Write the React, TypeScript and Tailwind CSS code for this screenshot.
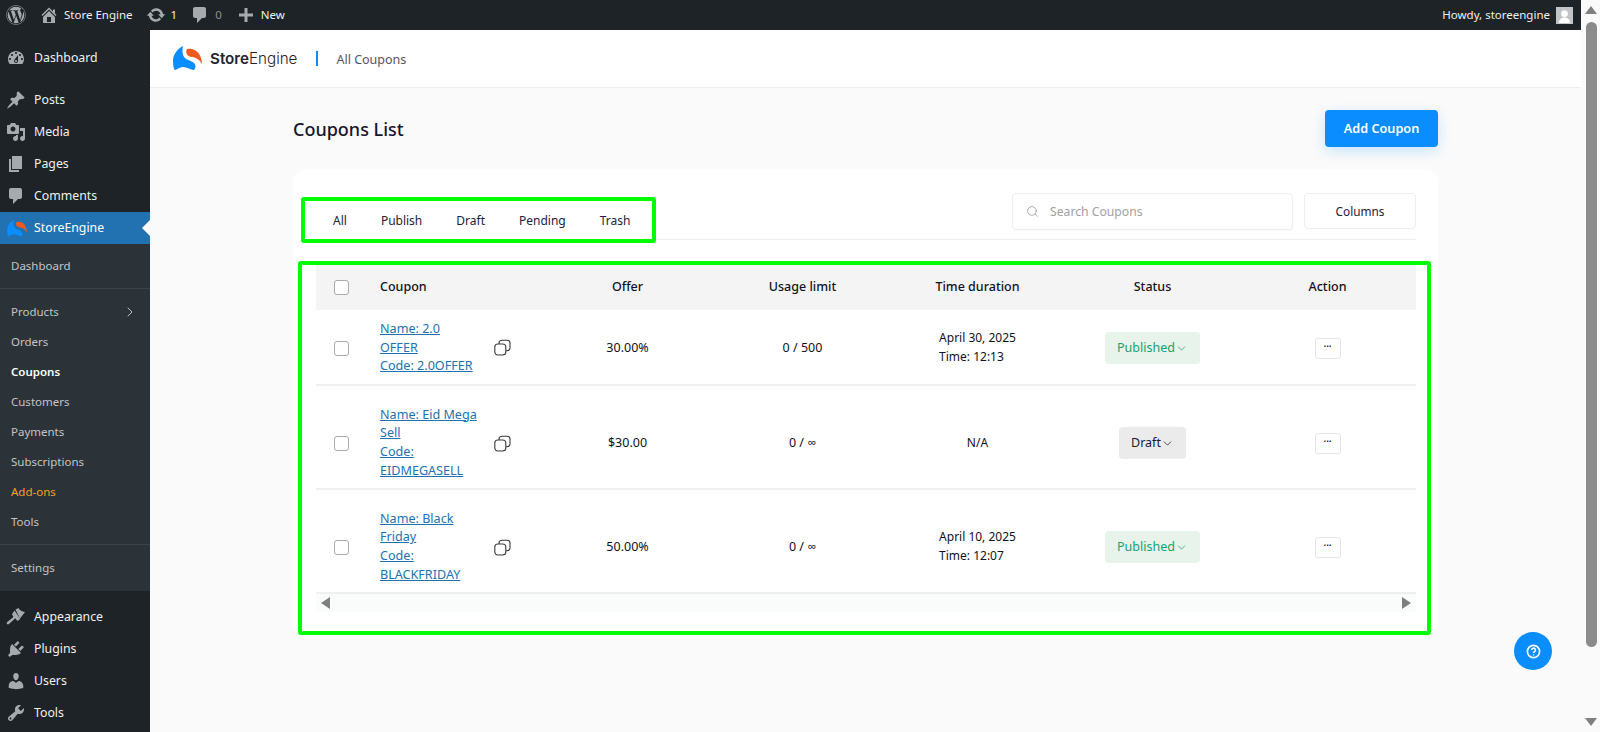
import { ChevronDown, ChevronRight, Search } from "lucide-react";
import { FaWordpress } from "react-icons/fa";

const icons: Record<string, string> = {
  dashboard:
    "M3.76 16h12.48c1.1-1.37 1.76-3.11 1.76-5 0-4.42-3.58-8-8-8s-8 3.58-8 8c0 1.89.66 3.63 1.76 5zM10 4c.55 0 1 .45 1 1s-.45 1-1 1-1-.45-1-1 .45-1 1-1zM6 6c.55 0 1 .45 1 1s-.45 1-1 1-1-.45-1-1 .45-1 1-1zm8 0c.55 0 1 .45 1 1s-.45 1-1 1-1-.45-1-1 .45-1 1-1zm-5.37 5.55L12 7v6c0 1.1-.9 2-2 2s-2-.9-2-2c0-.57.24-1.08.63-1.45zM4 10c.55 0 1 .45 1 1s-.45 1-1 1-1-.45-1-1 .45-1 1-1zm12 0c.55 0 1 .45 1 1s-.45 1-1 1-1-.45-1-1 .45-1 1-1zm-5 3c0-.55-.45-1-1-1s-1 .45-1 1 .45 1 1 1 1-.45 1-1z",
  posts:
    "M10.44 3.02l1.82-1.82 6.36 6.35-1.83 1.82c-1.05-.68-2.48-.57-3.41.36l-.75.75c-.92.93-1.04 2.35-.35 3.41l-1.83 1.82-2.41-2.41-2.8 2.79c-.42.42-3.38 2.71-3.8 2.29s1.86-3.39 2.28-3.81l2.79-2.79L4.1 9.36l1.83-1.82c1.05.69 2.48.57 3.4-.36l.75-.75c.93-.92 1.05-2.35.36-3.41z",
  media:
    "M13 11V4c0-.55-.45-1-1-1h-1.67L9 1H5L3.67 3H2c-.55 0-1 .45-1 1v7c0 .55.45 1 1 1h10c.55 0 1-.45 1-1zM7 4.5c1.38 0 2.5 1.12 2.5 2.5S8.38 9.5 7 9.5 4.5 8.38 4.5 7 5.62 4.5 7 4.5zM14 6h5v10.5c0 1.38-1.12 2.5-2.5 2.5S14 17.88 14 16.5s1.12-2.5 2.5-2.5c.17 0 .34.02.5.05V9h-3V6zm-4 8.05V13h2v3.5c0 1.38-1.12 2.5-2.5 2.5S7 17.88 7 16.5 8.12 14 9.5 14c.17 0 .34.02.5.05z",
  pages: "M6 15V2h10v13H6zm-1 1h8v2H3V5h2v11z",
  comments:
    "M5 2h9c1.1 0 2 .9 2 2v7c0 1.1-.9 2-2 2h-2l-5 5v-5H5c-1.1 0-2-.9-2-2V4c0-1.1.9-2 2-2z",
  appearance:
    "M9.5 2.5l3-1.5c1 2 3 3.5 6.5 4l-5 6.5zM8.6 3.4l5.6 8.6-1.8 1.4c-.5.4-1.2.3-1.6-.2l-.9-1.2c-.4-.5-1-.5-1.4-.1l-5.5 5.2c-.6.5-1.5.5-2-.1s-.4-1.4.2-1.9l5.7-4.7c.4-.4.5-1 .1-1.4l-.7-1c-.3-.5-.3-1.1.1-1.5z",
  plugins:
    "M13.11 4.36L9.87 7.6 8 5.73l3.24-3.24c.35-.34 1.05-.2 1.56.32.52.51.66 1.21.31 1.55zm-8 1.77l.91-1.12 9.01 9.01-1.19.84c-.71.71-2.63 1.16-3.82 1.16H6.14L4.9 17.26c-.59.59-1.54.59-2.12 0-.59-.58-.59-1.53 0-2.12l1.24-1.24v-3.88c0-1.13.4-3.19 1.09-3.89zm7.26 3.97l3.24-3.24c.34-.35 1.04-.21 1.55.31.52.51.66 1.21.31 1.55l-3.24 3.25z",
  users:
    "M10 9.25c-2.27 0-2.73-3.44-2.73-3.44C7 4.02 7.82 2 9.97 2c2.16 0 2.98 2.02 2.71 3.81 0 0-.41 3.44-2.68 3.44zm0 2.57L12.72 10c2.39 0 4.52 2.33 4.52 4.53v2.49s-3.65 1.13-7.24 1.13c-3.65 0-7.24-1.13-7.24-1.13v-2.49c0-2.25 1.94-4.48 4.47-4.48z",
  tools:
    "M16.68 9.77c-1.34 1.34-3.3 1.67-4.95.99l-5.41 6.52c-.99.99-2.59.99-3.58 0s-.99-2.59 0-3.57l6.52-5.42c-.68-1.65-.35-3.61.99-4.95 1.28-1.28 3.12-1.62 4.72-1.06l-2.89 2.89 2.82 2.82 2.86-2.87c.53 1.58.18 3.39-1.08 4.65zM3.81 16.21c.4.39 1.04.39 1.43 0 .4-.4.4-1.04 0-1.43-.39-.4-1.03-.4-1.43 0-.39.39-.39 1.03 0 1.43z",
  home: "M16 8.5l1.53 1.53-1.06 1.06L10 4.62l-6.47 6.47-1.06-1.06L10 2.5l4 4v-2h2v4zm-6-2.46l6 5.99V18H4v-5.97zM12 17v-5H8v5h4z",
  update:
    "M10.2 3.28c3.53 0 6.43 2.61 6.92 6h2.08l-3.5 4-3.5-4h2.32c-.45-1.97-2.21-3.45-4.32-3.45-1.45 0-2.73.71-3.54 1.78L4.95 5.66C6.23 4.2 8.11 3.28 10.2 3.28zm-.4 13.44c-3.52 0-6.43-2.61-6.92-6H.8l3.5-4c1.17 1.33 2.33 2.67 3.5 4H5.48c.45 1.97 2.21 3.45 4.32 3.45 1.45 0 2.73-.71 3.54-1.78l1.71 1.95c-1.28 1.46-3.15 2.38-5.25 2.38z",
  plus: "M17 8.5v3h-5.5V17h-3v-5.5H3v-3h5.5V3h3v5.5z",
};

function Dash({ name, className }: { name: string; className: string }) {
  return (
    <svg viewBox="0 0 20 20" fill="currentColor" className={className}>
      <path d={icons[name]} />
    </svg>
  );
}

function Logo({ className }: { className: string }) {
  return (
    <svg viewBox="0 0 29 25" className={className}>
      <path
        fill="#0a8dff"
        d="M10 0C4 3 0 9 0 15c0 5 1 9 2 9 2 0 4-3 8-3s8 3 11 3c2-2 2-5 0-7-4-4-14-2-11-17z"
      />
      <path fill="#f4591f" d="M14 3c8-2 15 5 15 15-3-5-7-7-10-7-5 0-7-5-5-8z" />
    </svg>
  );
}

function MainItem({ icon, label }: { icon: string; label: string }) {
  return (
    <div className="flex h-8 items-center text-[12.3px] text-[#f0f0f1]">
      <div className="flex w-[34px] justify-center pr-[2px]">
        <Dash name={icon} className="h-5 w-5 text-[#a7aaad]" />
      </div>
      <span className="pt-[1px]">{label}</span>
    </div>
  );
}

function SubItem({ label, className = "text-[#c3c4c7]" }: { label: string; className?: string }) {
  return (
    <div className={`flex h-[30px] items-center justify-between pl-[11px] pr-[12px] text-[11.5px] ${className}`}>
      <span>{label}</span>
      {label === "Products" && <ChevronRight className="h-4 w-4" strokeWidth={1.5} />}
    </div>
  );
}

function Sidebar() {
  return (
    <aside className="flex w-[150px] shrink-0 flex-col bg-[#1d2327] pt-3">
      <MainItem icon="dashboard" label="Dashboard" />
      <div className="mt-[10px]">
        <MainItem icon="posts" label="Posts" />
        <MainItem icon="media" label="Media" />
        <MainItem icon="pages" label="Pages" />
        <MainItem icon="comments" label="Comments" />
      </div>
      <div className="relative flex h-8 items-center bg-[#2271b1] text-[12.3px] text-white">
        <div className="flex w-[34px] justify-center pr-[1px]">
          <Logo className="h-[17px] w-[20px]" />
        </div>
        <span className="pt-[1px]">StoreEngine</span>
        <div className="absolute right-0 top-[8px] h-0 w-0 border-y-[8px] border-r-[8px] border-y-transparent border-r-[#fafafa]" />
      </div>
      <div className="bg-[#2c3338] pb-2 pt-[7px]">
        <div className="border-b border-[#3c434a] pb-[7px]">
          <SubItem label="Dashboard" />
        </div>
        <div className="border-b border-[#3c434a] py-2 pb-[7px]">
          <SubItem label="Products" />
          <SubItem label="Orders" />
          <SubItem label="Coupons" className="font-semibold text-white" />
          <SubItem label="Customers" />
          <SubItem label="Payments" />
          <SubItem label="Subscriptions" />
          <SubItem label="Add-ons" className="text-[#f0a02c]" />
          <SubItem label="Tools" />
        </div>
        <div className="pt-2">
          <SubItem label="Settings" />
        </div>
      </div>
      <div className="mt-[10px]">
        <MainItem icon="appearance" label="Appearance" />
        <MainItem icon="plugins" label="Plugins" />
        <MainItem icon="users" label="Users" />
        <MainItem icon="tools" label="Tools" />
      </div>
    </aside>
  );
}

function AdminBar() {
  return (
    <header className="flex h-[30px] shrink-0 items-center justify-between bg-[#1d2327] text-[11.5px] text-[#f0f0f1]">
      <div className="flex items-center">
        <FaWordpress className="ml-[6px] h-5 w-5 text-[#a7aaad]" />
        <Dash name="home" className="ml-[13px] h-5 w-5 text-[#a7aaad]" />
        <span className="ml-[5px]">Store Engine</span>
        <Dash name="update" className="ml-[13px] h-5 w-5 text-[#a7aaad]" />
        <span className="ml-[5px]">1</span>
        <Dash name="comments" className="ml-[13px] h-5 w-5 text-[#a7aaad]" />
        <span className="ml-[5px] text-[#8c8f94]">0</span>
        <Dash name="plus" className="ml-[14px] h-5 w-5 text-[#a7aaad]" />
        <span className="ml-[5px]">New</span>
      </div>
      <div className="flex items-center pr-[8px]">
        <span>Howdy, storeengine</span>
        <div className="ml-[6px] flex h-[17px] w-[17px] items-end justify-center overflow-hidden border border-[#c3c4c7] bg-[#c3c4c7]">
          <svg viewBox="0 0 16 16" fill="white" className="h-[15px] w-[15px]">
            <circle cx="8" cy="6" r="3.5" />
            <path d="M2 16c0-4 3-6 6-6s6 2 6 6z" />
          </svg>
        </div>
      </div>
    </header>
  );
}

function CopyIcon() {
  return (
    <svg viewBox="0 0 17 17" fill="none" stroke="#3b3b3b" strokeWidth="1.1" className="h-[17px] w-[17px] shrink-0">
      <rect x="0.8" y="5" width="11" height="11" rx="3" />
      <path d="M5 5V4.3a3 3 0 0 1 3-3h5a3 3 0 0 1 3 3v4.4a3 3 0 0 1-3 3h-1.2" />
    </svg>
  );
}

function StatusPill({ status }: { status: string }) {
  const published = status === "Published";
  return (
    <div
      className={`flex h-[32px] items-center rounded-[4px] px-3 text-[12.5px] ${
        published ? "bg-[#e8f3ec] text-[#22a06b]" : "bg-[#ebebeb] text-[#1c1c2b]"
      }`}
    >
      {status}
      <ChevronDown className="h-[13px] w-[13px]" strokeWidth={1.4} />
    </div>
  );
}

const gridCols = "grid grid-cols-[50px_174px_repeat(5,175px)] items-center";

const rows = [
  {
    lines: ["Name: 2.0", "OFFER", "Code: 2.0OFFER"],
    offer: "30.00%",
    usage: "0 / 500",
    time: ["April 30, 2025", "Time: 12:13"],
    status: "Published",
    height: "h-[76px] pt-[2px]",
  },
  {
    lines: ["Name: Eid Mega", "Sell", "Code:", "EIDMEGASELL"],
    offer: "$30.00",
    usage: "0 / ∞",
    time: ["N/A"],
    status: "Draft",
    height: "h-[104px] pt-[12px]",
  },
  {
    lines: ["Name: Black", "Friday", "Code:", "BLACKFRIDAY"],
    offer: "50.00%",
    usage: "0 / ∞",
    time: ["April 10, 2025", "Time: 12:07"],
    status: "Published",
    height: "h-[104px] pt-[12px]",
  },
];

function CouponTable() {
  return (
    <div className="-ml-[18px] -mr-[15px] mt-[21px] h-[374px] rounded-[3px] border-4 border-[#00ff00] pl-[14px] pr-[11px]">
      <div className={`${gridCols} h-[45px] bg-[#f4f4f4] pb-[1px] text-center text-[12.5px] font-medium text-[#111122]`}>
        <div className="flex justify-center">
          <input type="checkbox" className="h-[15px] w-[15px] appearance-none rounded-[3px] border border-[#aaaaaa] bg-white" />
        </div>
        <div className="pl-[14px] text-left">Coupon</div>
        <div>Offer</div>
        <div>Usage limit</div>
        <div>Time duration</div>
        <div>Status</div>
        <div>Action</div>
      </div>
      {rows.map((row) => (
        <div
          key={row.lines[0]}
          className={`${gridCols} ${row.height} border-b-2 border-[#f0f0f0] text-center text-[12.5px] text-[#111122]`}
        >
          <div className="flex justify-center">
            <input type="checkbox" className="h-[15px] w-[15px] appearance-none rounded-[3px] border border-[#aaaaaa] bg-white" />
          </div>
          <div className="flex items-center pl-[14px]">
            <a className="block w-[114px] text-left text-[12.6px] leading-[18.7px] text-[#2271b1] underline">
              {row.lines.map((line) => (
                <span key={line} className="block">
                  {line}
                </span>
              ))}
            </a>
            <CopyIcon />
          </div>
          <div>{row.offer}</div>
          <div>{row.usage}</div>
          <div className="flex justify-center">
            <div className="text-left text-[12px] leading-[18.7px]">
              {row.time.map((t) => (
                <div key={t}>{t}</div>
              ))}
            </div>
          </div>
          <div className="flex justify-center">
            <StatusPill status={row.status} />
          </div>
          <div className="flex justify-center">
            <button className="flex h-[21px] w-[26px] items-center justify-center rounded-[3px] border border-[#e5e5e5] bg-white pb-[4px] text-[10px] font-medium leading-none text-black">
              ···
            </button>
          </div>
        </div>
      ))}
      <div className="flex h-[18px] items-center justify-between bg-[#fafbfb] px-[5px]">
        <div className="h-0 w-0 border-y-[6px] border-r-[9px] border-y-transparent border-r-[#7f7f7f]" />
        <div className="h-0 w-0 border-y-[6px] border-l-[9px] border-y-transparent border-l-[#7f7f7f]" />
      </div>
    </div>
  );
}

function CouponsCard() {
  return (
    <section className="mt-[23px] h-[464px] rounded-xl bg-white px-[23px] pt-[23px] pr-[22px]">
      <div className="flex h-[47px] items-start justify-between border-b border-[#ececec]">
        <div className="relative z-10 -ml-[15px] mt-1 flex h-[46px] w-[355px] items-center rounded-[3px] border-4 border-[#00ff00] bg-white pl-[11px] pt-[1px] text-[12px] text-[#22223a]">
          {["All", "Publish", "Draft", "Pending", "Trash"].map((tab) => (
            <span key={tab} className="px-[17px]">
              {tab}
            </span>
          ))}
        </div>
        <div className="flex items-start gap-[11px]">
          <div className="flex h-[37px] w-[281px] items-center rounded-[4px] border border-[#eeeeee] bg-white pl-[13px] shadow-[0_1px_1px_rgba(0,0,0,0.03)]">
            <Search className="h-[13px] w-[13px] text-[#9a9a9a]" strokeWidth={1.5} />
            <input
              placeholder="Search Coupons"
              className="ml-[11px] w-[200px] bg-transparent pt-[1px] text-[12.2px] outline-none placeholder:text-[#a0a0a0]"
            />
          </div>
          <button className="flex h-[36px] w-[112px] items-center justify-center rounded-[4px] border border-[#eeeeee] bg-white pt-[1px] text-[11.8px] text-[#22223a]">
            Columns
          </button>
        </div>
      </div>
      <CouponTable />
    </section>
  );
}

function Scrollbar() {
  return (
    <div className="flex w-[19px] shrink-0 flex-col items-center bg-[#fafafa]">
      <div className="mt-[6px] h-0 w-0 border-x-[6.5px] border-b-[8px] border-x-transparent border-b-[#7f7f7f]" />
      <div className="ml-[2px] mt-[8px] h-[625px] w-[11px] rounded-full bg-[#8b8b8b]" />
      <div className="mt-[71px] h-0 w-0 border-x-[6.5px] border-t-[8px] border-x-transparent border-t-[#7f7f7f]" />
    </div>
  );
}

export default function App() {
  return (
    <div
      className="relative flex h-[732px] w-[1600px] overflow-hidden bg-[#fafafa]"
      style={{ fontFamily: '"Noto Sans", "Open Sans", sans-serif' }}
    >
      <div className="flex min-w-0 flex-1 flex-col">
        <AdminBar />
        <div className="flex min-h-0 flex-1">
          <Sidebar />
          <main className="min-w-0 flex-1">
            <div className="flex h-[58px] items-center border-b border-[#eeeeee] bg-white pl-[23px]">
              <Logo className="h-[25px] w-[29px]" />
              <span className="ml-[8px] pt-[2px] text-[15.2px] text-[#23232f]" style={{ fontFamily: "Inter, sans-serif" }}>
                <span className="font-semibold">Store</span>
                <span className="font-light">Engine</span>
              </span>
              <div className="ml-[19px] h-[15px] w-[2px] bg-[#0a8dff]" />
              <span className="ml-[18px] pt-[3px] text-[12.5px] text-[#555560]">All Coupons</span>
            </div>
            <div className="pl-[143px] pr-[143px]">
              <div className="flex items-center justify-between pt-[22px]">
                <h1 className="mt-[2px] text-[18px] font-medium text-[#16162a]">Coupons List</h1>
                <button className="h-[37px] w-[113px] rounded-[4px] bg-[#0a8dff] text-[12.7px] font-semibold text-white shadow-[0_4px_14px_rgba(10,141,255,0.2)]">
                  Add Coupon
                </button>
              </div>
              <CouponsCard />
            </div>
          </main>
        </div>
      </div>
      <Scrollbar />
      <button className="absolute left-[1514px] top-[632px] flex h-[38px] w-[38px] items-center justify-center rounded-full bg-[#0a8dff]">
        <svg viewBox="0 0 16 16" fill="none" stroke="white" className="h-[15px] w-[15px]">
          <circle cx="8" cy="8" r="6.5" strokeWidth="1.8" />
          <path d="M6 6.5a2 2 0 1 1 3 1.7c-.7.4-1 .8-1 1.4" strokeWidth="1.8" />
          <circle cx="8" cy="11.6" r="0.5" fill="white" strokeWidth="0.6" />
        </svg>
      </button>
    </div>
  );
}
